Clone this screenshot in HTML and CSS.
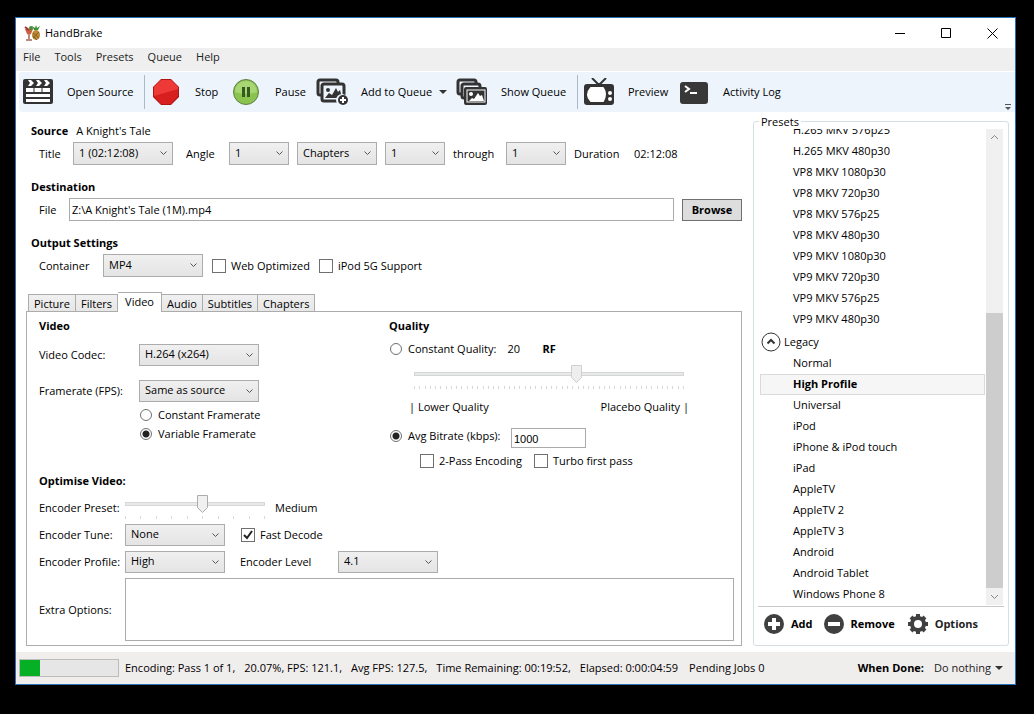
FILE: index.html
```
<!DOCTYPE html>
<html lang="en">
<head>
    <meta charset="UTF-8">
    <meta name="viewport" content="width=device-width, initial-scale=1.0">
    <title>HandBrake</title>
    <link rel="stylesheet" href="styles.css">
</head>
<body>
    <div class="window">
        <header class="titlebar">
            <svg class="app-icon" width="17" height="17" viewBox="0 0 17 17">
                <path d="M10 5L8 1l3 2 1-3 1 3 3-2-2 4z" fill="#3f8f3a"/>
                <ellipse cx="12" cy="10" rx="4" ry="5" fill="#b98a35"/>
                <path d="M9 8l6 5M9 11l4 4M15 7l-6 6" stroke="#8a5f22"/>
                <path d="M1 4h8L7 9 5 10 3 9z" fill="#c9603f"/>
                <path d="M1 2l4 3" stroke="#a33" stroke-width="2"/>
                <circle cx="7" cy="3" r="2" fill="#4d8a3c"/>
                <path d="M5 10v5M2 15h6" stroke="#b88b80" stroke-width="2"/>
            </svg>
            <h1>HandBrake</h1>
            <div class="window-buttons">
                <button type="button" aria-label="Minimize"><svg width="11" height="11"><path d="M0 5.5h10" stroke="#000"/></svg></button>
                <button type="button" aria-label="Maximize"><svg width="11" height="11"><path d="M.5.5h9v9h-9z" fill="none" stroke="#000"/></svg></button>
                <button type="button" aria-label="Close"><svg width="11" height="11"><path d="M.5.5l10 10M10.5.5l-10 10" stroke="#000"/></svg></button>
            </div>
        </header>

        <nav class="menu">
            <a href="#">File</a>
            <a href="#">Tools</a>
            <a href="#">Presets</a>
            <a href="#">Queue</a>
            <a href="#">Help</a>
        </nav>

        <div class="toolbar">
            <button type="button" class="tool tool-open">
                <svg width="30" height="28" viewBox="0 0 30 28">
                    <rect y="1" width="30" height="25" rx="2" fill="#333"/>
                    <path d="M5 2h3l3 3-3 3H5l2-3zM13 2h3l3 3-3 3h-3l2-3zM21 2h3l3 3-3 3h-3l2-3z" fill="#fff"/>
                    <path d="M3 10h24v4H3zM3 16h24v3H3zM3 21h24v3H3z" fill="#fff"/>
                    <path d="M11 10v4M19 10v4" stroke="#333"/>
                </svg>
                Open Source
            </button>
            <button type="button" class="tool tool-stop">
                <svg width="28" height="28" viewBox="0 0 28 28">
                    <path d="M8 1h10l8 8v10l-8 8H8l-8-8V9z" fill="#b01414"/>
                    <path d="M8 2h10l7 7v9l-7 8H8l-7-8V9z" fill="#d81f1f"/>
                    <path d="M8 2h10l7 7v2L1 18V9z" fill="#ee3a36"/>
                </svg>
                Stop
            </button>
            <button type="button" class="tool tool-pause">
                <svg width="28" height="28" viewBox="0 0 28 28">
                    <circle cx="13" cy="14" r="12.5" fill="#8bc34f" stroke="#5f7f45"/>
                    <path d="M2 14a11 11 0 0 1 22 0q-11 4-22 0z" fill="#a8d672"/>
                    <path d="M9 9h3v10H9zM14 9h3v10h-3z" fill="#355a20"/>
                </svg>
                Pause
            </button>
            <button type="button" class="tool tool-add">
                <svg width="32" height="28" viewBox="0 0 32 28">
                    <rect x="2" y="2" width="20" height="15" rx="2" fill="#edf4fc" stroke="#333" stroke-width="3"/>
                    <rect x="6" y="6" width="22" height="17" rx="2" fill="#edf4fc" stroke="#333" stroke-width="3"/>
                    <circle cx="12" cy="12" r="2" fill="#333"/>
                    <path d="M9 20l4-5 3 2 4-7 2 4 2-2 2 8z" fill="#333"/>
                    <circle cx="26" cy="22" r="6" fill="#edf4fc"/>
                    <circle cx="27" cy="22" r="5" fill="#333"/>
                    <path d="M27 19v6M24 22h6" stroke="#fff" stroke-width="2"/>
                </svg>
                Add to Queue
                <svg class="arrow" width="8" height="4" viewBox="0 0 8 4"><path d="M0 0h8L4 4z" fill="#333"/></svg>
            </button>
            <button type="button" class="tool tool-show">
                <svg width="32" height="28" viewBox="0 0 32 28">
                    <rect x="2" y="2" width="18" height="14" rx="2" fill="#edf4fc" stroke="#333" stroke-width="3"/>
                    <rect x="6" y="6" width="18" height="14" rx="2" fill="#edf4fc" stroke="#333" stroke-width="3"/>
                    <rect x="8" y="9" width="23" height="18" rx="2" fill="#333"/>
                    <rect x="11" y="12" width="18" height="12" fill="#333" stroke="#fff"/>
                    <circle cx="15" cy="16" r="2" fill="#fff"/>
                    <path d="M13 23l3-3 2 1 4-6 2 3 2-1 2 6z" fill="#fff"/>
                </svg>
                Show Queue
            </button>
            <button type="button" class="tool tool-preview">
                <svg width="30" height="28" viewBox="0 0 30 28">
                    <path d="M8 0l7 7 7-7" fill="none" stroke="#333" stroke-width="2"/>
                    <path d="M11 7q4-4 8 0z" fill="#333"/>
                    <rect y="6" width="30" height="21" rx="3" fill="#333"/>
                    <path d="M7 10h12q4 6 0 13H7Q1 17 7 10z" fill="#fff" stroke="#fff" stroke-width="2" stroke-linejoin="round"/>
                    <circle cx="26" cy="15" r="2" fill="#fff"/>
                    <circle cx="26" cy="21" r="2" fill="#fff"/>
                </svg>
                Preview
            </button>
            <button type="button" class="tool">
                <svg width="29" height="28" viewBox="0 0 29 28">
                    <rect y="4" width="28" height="22" rx="3" fill="#383838"/>
                    <path d="M5 8l4 3-4 3M10 15h7" fill="none" stroke="#fff" stroke-width="2"/>
                </svg>
                Activity Log
            </button>
            <svg class="overflow" width="6" height="6" viewBox="0 0 6 6"><path d="M0 .5h6" stroke="#555"/><path d="M0 3h6L3 6z" fill="#555"/></svg>
        </div>

        <main class="content">
            <div class="settings">
                <div class="section">
                    <div class="source"><h2>Source</h2><span>A Knight's Tale</span></div>
                    <div class="row">
                        <label class="label-title" for="title">Title</label>
                        <select id="title" class="w100"><option>1 (02:12:08)</option></select>
                        <label class="label-angle" for="angle">Angle</label>
                        <select id="angle" class="w60"><option>1</option></select>
                        <select class="w80" aria-label="Range type"><option>Chapters</option></select>
                        <select class="w60" aria-label="Start chapter"><option>1</option></select>
                        <label class="label-through" for="end">through</label>
                        <select id="end" class="w60"><option>1</option></select>
                        <span class="label-duration">Duration</span>
                        <span>02:12:08</span>
                    </div>
                </div>

                <div class="section">
                    <h2>Destination</h2>
                    <div class="row">
                        <label class="label-file" for="file">File</label>
                        <input type="text" id="file" class="file" value="Z:\A Knight's Tale (1M).mp4">
                        <button type="button" class="browse">Browse</button>
                    </div>
                </div>

                <div class="section">
                    <h2>Output Settings</h2>
                    <div class="row">
                        <label class="label-container" for="container">Container</label>
                        <select id="container" class="w100"><option>MP4</option></select>
                        <div class="container-checks">
                            <label class="check"><input type="checkbox">Web Optimized</label>
                            <label class="check"><input type="checkbox">iPod 5G Support</label>
                        </div>
                    </div>
                </div>

                <div class="tabs" role="tablist">
                    <button type="button" role="tab">Picture</button>
                    <button type="button" role="tab">Filters</button>
                    <button type="button" role="tab" class="active" aria-selected="true">Video</button>
                    <button type="button" role="tab">Audio</button>
                    <button type="button" role="tab">Subtitles</button>
                    <button type="button" role="tab">Chapters</button>
                </div>

                <div class="panel" role="tabpanel">
                    <div class="columns">
                        <div class="video">
                            <h2>Video</h2>
                            <div class="field">
                                <label for="codec">Video Codec:</label>
                                <select id="codec"><option>H.264 (x264)</option></select>
                            </div>
                            <div class="field">
                                <label for="framerate">Framerate (FPS):</label>
                                <select id="framerate"><option>Same as source</option></select>
                            </div>
                            <div class="radios">
                                <label class="radio"><input type="radio" name="rate">Constant Framerate</label>
                                <label class="radio"><input type="radio" name="rate" checked>Variable Framerate</label>
                            </div>
                        </div>

                        <div class="quality">
                            <h2>Quality</h2>
                            <div class="quality-row">
                                <label class="radio"><input type="radio" name="quality">Constant Quality:</label>
                                <span class="rf-value">20</span>
                                <strong>RF</strong>
                            </div>
                            <div class="quality-slider">
                                <input type="range" class="slider disabled" min="0" max="51" value="31" aria-label="Quality" disabled>
                                <div class="ticks ticks-quality"></div>
                            </div>
                            <div class="quality-ends"><span>| Lower Quality</span><span>Placebo Quality |</span></div>
                            <div class="bitrate-row">
                                <label class="radio" for="avg"><input type="radio" id="avg" name="quality" checked>Avg Bitrate (kbps):</label>
                                <input type="text" class="bitrate" value="1000" aria-label="Average bitrate">
                            </div>
                            <div class="passes">
                                <label class="check"><input type="checkbox">2-Pass Encoding</label>
                                <label class="check"><input type="checkbox">Turbo first pass</label>
                            </div>
                        </div>
                    </div>

                    <h2>Optimise Video:</h2>
                    <div class="optimise">
                        <label for="preset" class="label-preset">Encoder Preset:</label>
                        <div class="optimise-row preset-row">
                            <div class="preset-slider">
                                <input type="range" id="preset" class="slider" min="0" max="9" value="5">
                                <div class="ticks ticks-preset"></div>
                            </div>
                            <span>Medium</span>
                        </div>
                        <label for="tune">Encoder Tune:</label>
                        <div class="optimise-row">
                            <select id="tune" class="w100"><option>None</option></select>
                            <label class="check"><input type="checkbox" checked>Fast Decode</label>
                        </div>
                        <label for="profile">Encoder Profile:</label>
                        <div class="optimise-row">
                            <select id="profile" class="w100"><option>High</option></select>
                            <label class="label-level" for="level">Encoder Level</label>
                            <select id="level" class="w100"><option>4.1</option></select>
                        </div>
                        <label for="extra">Extra Options:</label>
                        <textarea id="extra"></textarea>
                    </div>
                </div>
            </div>

            <fieldset class="presets">
                <legend>Presets</legend>
                <div class="preset-view">
                    <div class="preset-list">
                        <button type="button">H.265 MKV 576p25</button>
                        <button type="button">H.265 MKV 480p30</button>
                        <button type="button">VP8 MKV 1080p30</button>
                        <button type="button">VP8 MKV 720p30</button>
                        <button type="button">VP8 MKV 576p25</button>
                        <button type="button">VP8 MKV 480p30</button>
                        <button type="button">VP9 MKV 1080p30</button>
                        <button type="button">VP9 MKV 720p30</button>
                        <button type="button">VP9 MKV 576p25</button>
                        <button type="button">VP9 MKV 480p30</button>
                        <button type="button" class="group" aria-expanded="true">
                            <svg width="20" height="20" viewBox="0 0 20 20"><circle cx="10" cy="10" r="9" fill="#fff" stroke="#333"/><path d="M6.500 11.500L10 8l3.500 3.500" fill="none" stroke="#333" stroke-width="2"/></svg>
                            Legacy
                        </button>
                        <button type="button">Normal</button>
                        <button type="button" class="selected">High Profile</button>
                        <button type="button">Universal</button>
                        <button type="button">iPod</button>
                        <button type="button">iPhone &amp; iPod touch</button>
                        <button type="button">iPad</button>
                        <button type="button">AppleTV</button>
                        <button type="button">AppleTV 2</button>
                        <button type="button">AppleTV 3</button>
                        <button type="button">Android</button>
                        <button type="button">Android Tablet</button>
                        <button type="button">Windows Phone 8</button>
                    </div>
                    <div class="scrollbar" aria-hidden="true">
                        <svg width="17" height="17"><path d="M5 10l3.500-3.500L12 10" fill="none" stroke="#888"/></svg>
                        <div class="scroll-space"></div>
                        <div class="scroll-thumb"></div>
                        <svg width="17" height="17"><path d="M5 7l3.500 3.500L12 7" fill="none" stroke="#888"/></svg>
                    </div>
                </div>
                <div class="preset-actions">
                    <button type="button">
                        <svg width="20" height="20" viewBox="0 0 20 20"><circle cx="10" cy="10" r="10" fill="#404040"/><path d="M10 4v12M4 10h12" stroke="#fff" stroke-width="4"/></svg>
                        Add
                    </button>
                    <button type="button">
                        <svg width="20" height="20" viewBox="0 0 20 20"><circle cx="10" cy="10" r="10" fill="#404040"/><path d="M4 10h12" stroke="#fff" stroke-width="4"/></svg>
                        Remove
                    </button>
                    <button type="button" class="options">
                        <svg width="20" height="20" viewBox="0 0 20 20"><circle cx="10" cy="10" r="8" fill="#404040"/><path d="M10 0v20M0 10h20M3 3l14 14M17 3L3 17" stroke="#404040" stroke-width="4"/><circle cx="10" cy="10" r="4" fill="#fff"/></svg>
                        Options
                    </button>
                </div>
            </fieldset>
        </main>

        <footer class="status">
            <progress value="20.07" max="100" aria-label="Encoding progress"></progress>
            <div class="encoding">
                <span>Encoding: Pass 1 of 1,</span>
                <span>20.07%, FPS: 121.1,</span>
                <span>Avg FPS: 127.5,</span>
                <span>Time Remaining: 00:19:52,</span>
                <span>Elapsed: 0:00:04:59</span>
            </div>
            <span class="pending">Pending Jobs 0</span>
            <strong>When Done:</strong>
            <button type="button" class="when-done">Do nothing<svg width="8" height="4" viewBox="0 0 8 4"><path d="M0 0h8L4 4z" fill="#333"/></svg></button>
        </footer>
    </div>
</body>
</html>
```
FILE: styles.css
```
* {
    box-sizing: border-box;
}
body {
    margin: 0;
    padding: 17px 18px 29px 15px;
    background-color: #000;
    color: #000;
    font-family: "Open Sans", "Noto Sans", sans-serif;
    font-size: 11px;
    line-height: 16px;
}
h1, h2 {
    margin: 0;
    font-size: 11px;
    line-height: 16px;
}
h1 {
    font-weight: normal;
}
button, input, select, textarea {
    margin: 0;
    font: inherit;
    color: inherit;
}
button {
    padding: 0;
    border: none;
    background: none;
    white-space: nowrap;
}
svg {
    flex: none;
}
.window {
    border: 1px solid #2a70b8;
    background-color: #fff;
}

/* title bar and menu */
.titlebar {
    display: flex;
    align-items: center;
    height: 30px;
    padding-left: 8px;
}
.app-icon {
    margin-right: 4px;
}
.window-buttons {
    display: flex;
    margin-left: auto;
}
.window-buttons button {
    display: flex;
    align-items: center;
    justify-content: center;
    width: 46px;
    height: 28px;
}
.menu {
    display: flex;
    gap: 14px;
    height: 23px;
    padding: 1px 7px;
    background-color: #efefef;
}
.menu a {
    color: #222;
    text-decoration: none;
}

/* toolbar */
.toolbar {
    display: flex;
    align-items: center;
    height: 41px;
    margin-left: 3px;
    padding-left: 4px;
    border-top: 1px solid #fff;
    border-radius: 3px 0 0 3px;
    background-color: #edf4fc;
}
.tool {
    display: flex;
    align-items: center;
    gap: 14px;
    height: 34px;
}
.tool-open {
    width: 122px;
    margin-right: 8px;
    border-right: 1px solid #a9bac9;
}
.tool-stop {
    width: 80px;
}
.tool-pause {
    width: 83px;
}
.tool-add {
    width: 140px;
}
.tool-show {
    width: 122px;
    margin-right: 6px;
    border-right: 1px solid #a9bac9;
}
.tool-preview {
    width: 96px;
}
.tool-add, .tool-show {
    gap: 13px;
}
.tool .arrow {
    margin-left: -6px;
}
.overflow {
    align-self: flex-end;
    margin: 0 4px 2px auto;
}

/* main area */
.content {
    display: grid;
    grid-template-columns: 1fr 256px;
    gap: 11px;
    padding: 2px 6px 6px 10px;
}
.settings {
    display: flex;
    flex-direction: column;
    padding-top: 9px;
}
.section {
    padding-left: 5px;
    margin-bottom: 14px;
}
.source {
    display: flex;
    gap: 8px;
}
.row {
    display: flex;
    align-items: center;
    gap: 8px;
    height: 23px;
    margin-top: 3px;
    padding-left: 8px;
}
.label-title {
    width: 26px;
}
.label-angle {
    width: 40px;
    padding-left: 5px;
}
.label-through {
    width: 45px;
}
.label-duration {
    width: 52px;
}
.label-file {
    width: 22px;
}
.label-container {
    width: 56px;
}
select {
    width: 120px;
    height: 22px;
    padding: 0 18px 2px 5px;
    border: 1px solid #acacac;
    border-radius: 0;
    appearance: none;
    background: url("data:image/svg+xml,%3Csvg xmlns='http://www.w3.org/2000/svg' width='7' height='5'%3E%3Cpath d='M.5.500l3 3 3-3' fill='none' stroke='%23555'/%3E%3C/svg%3E") no-repeat right 5px center, linear-gradient(#f0f0f0, #e4e4e4);
}
.row select {
    height: 23px;
}
select.w100 {
    width: 100px;
}
select.w80 {
    width: 80px;
}
select.w60 {
    width: 60px;
}
input[type="text"] {
    border: 1px solid #ababab;
    border-radius: 0;
    background-color: #fff;
}
.file {
    flex: 1;
    height: 23px;
    padding: 0 2px;
}
.browse {
    width: 60px;
    height: 22px;
    border: 1px solid #707070;
    background-color: #ddd;
    font-weight: bold;
}
.container-checks {
    display: flex;
    gap: 9px;
    padding-left: 1px;
}
.check, .radio {
    display: flex;
    align-items: center;
    gap: 5px;
    white-space: nowrap;
}
input[type="checkbox"] {
    width: 14px;
    height: 14px;
    border: 1px solid #707070;
    appearance: none;
    background-color: #fff;
}
input[type="checkbox"]:checked {
    background: url("data:image/svg+xml,%3Csvg xmlns='http://www.w3.org/2000/svg' width='12' height='12'%3E%3Cpath d='M2 6l3 3 5-7' fill='none' stroke='%23222' stroke-width='2'/%3E%3C/svg%3E") no-repeat center;
}
input[type="radio"] {
    width: 12px;
    height: 12px;
    border: 1px solid #707070;
    border-radius: 50%;
    appearance: none;
    background-color: #fff;
}
input[type="radio"]:checked {
    background: radial-gradient(circle, #222 0 3px, #fff 4px);
}
.radio {
    gap: 6px;
    height: 19px;
}

/* tabs */
.tabs {
    display: flex;
    align-items: flex-end;
    height: 20px;
    margin-top: 1px;
    padding-left: 2px;
}
.tabs button {
    height: 18px;
    padding: 0 5px;
    border: 1px solid #acacac;
    border-left-width: 0;
    border-bottom: none;
    background: linear-gradient(#f0f0f0, #e6e6e6);
}
.tabs button:first-child {
    border-left-width: 1px;
}
.tabs .active {
    position: relative;
    z-index: 1;
    height: 20px;
    padding: 0 7px 2px;
    background: #fff;
}
.panel {
    flex: 1;
    margin-top: -1px;
    padding: 6px 7px 4px 12px;
    border: 1px solid #acacac;
}
.columns {
    display: grid;
    grid-template-columns: 350px 1fr;
    min-height: 155px;
}
.field {
    display: flex;
    align-items: center;
    height: 22px;
    margin-top: 10px;
}
.field + .field {
    margin-top: 14px;
}
.field label {
    width: 100px;
}
.radios {
    margin-top: 3px;
    padding-left: 101px;
}
.quality-row {
    display: flex;
    align-items: center;
    margin-top: 5px;
    padding-left: 1px;
}
.rf-value {
    width: 35px;
    margin-left: 11px;
}
.quality-slider {
    width: 270px;
    margin: 8px 0 0 25px;
}
.slider {
    display: block;
    width: 100%;
    height: 18px;
    appearance: none;
    background: none;
}
.slider::-webkit-slider-runnable-track {
    height: 4px;
    margin-top: -2px;
    border: 1px solid #d6d6d6;
    background-color: #e7eaea;
}
.slider::-webkit-slider-thumb {
    width: 11px;
    height: 18px;
    margin-top: -8px;
    appearance: none;
    background: url("data:image/svg+xml,%3Csvg xmlns='http://www.w3.org/2000/svg' width='11' height='18'%3E%3Cpath d='M.5.500h10v12l-5 5-5-5z' fill='%23f0f0f0' stroke='%23acacac'/%3E%3C/svg%3E");
}
.disabled::-webkit-slider-thumb {
    background: url("data:image/svg+xml,%3Csvg xmlns='http://www.w3.org/2000/svg' width='11' height='18'%3E%3Cpath d='M.5.500h10v12l-5 5-5-5z' fill='%23eee' stroke='%23d0d0d0'/%3E%3C/svg%3E");
}
.ticks {
    height: 3px;
    margin-top: 2px;
    border-right: 1px solid #d8d8d8;
}
.ticks-quality {
    background: repeating-linear-gradient(to right, #d8d8d8 0 1px, transparent 1px calc(100% / 51));
}
.ticks-preset {
    background: repeating-linear-gradient(to right, #d8d8d8 0 1px, transparent 1px calc(100% / 9));
}
.quality-ends {
    display: flex;
    justify-content: space-between;
    width: 280px;
    margin: 10px 0 0 20px;
}
.bitrate-row {
    display: flex;
    align-items: center;
    height: 20px;
    margin-top: 13px;
    padding-left: 1px;
}
.bitrate-row .radio {
    width: 121px;
    padding-bottom: 5px;
}
input.bitrate {
    width: 75px;
    height: 20px;
    padding: 1px 2px 0;
    font-family: "Liberation Sans", Arial, sans-serif;
}
.passes {
    display: flex;
    gap: 12px;
    margin: 5px 0 0 31px;
}

/* optimise video */
.optimise {
    display: grid;
    grid-template-columns: 86px 1fr;
    align-items: center;
    row-gap: 5px;
    white-space: nowrap;
}
.optimise-row {
    display: flex;
    align-items: center;
    height: 22px;
}
.optimise-row .check {
    margin-left: 16px;
}
.label-preset, .preset-row {
    padding-top: 8px;
}
.preset-row {
    gap: 10px;
    height: 30px;
}
.preset-slider {
    width: 140px;
    padding-bottom: 2px;
}
.label-level {
    width: 113px;
    padding-left: 15px;
}
textarea {
    display: block;
    width: 100%;
    height: 63px;
    border: 1px solid #ababab;
    resize: none;
}

/* presets */
.presets {
    display: flex;
    flex-direction: column;
    min-width: 0;
    margin: 0;
    padding: 0 4px;
    border: 1px solid #d5dfe5;
    border-radius: 3px;
}
legend {
    margin-left: 1px;
    padding: 0 2px;
    line-height: 15px;
}
.preset-view {
    display: flex;
    flex: 1 1 0;
    min-height: 0;
    padding-right: 1px;
}
.preset-list {
    display: flex;
    flex: 1;
    flex-direction: column;
    justify-content: flex-end;
    margin: 0 1px 0 2px;
    overflow: hidden;
}
.preset-list button {
    flex: none;
    height: 21px;
    padding: 0 0 1px 32px;
    border: 1px solid transparent;
    text-align: left;
}
.preset-list .selected {
    border-color: #dadada;
    background-color: #f6f6f6;
    font-weight: bold;
}
.preset-list .group {
    display: flex;
    align-items: center;
    gap: 3px;
    height: 23px;
    padding: 1px 0 0;
}
.scrollbar {
    display: flex;
    flex-direction: column;
    width: 17px;
    background-color: #f0f0f0;
}
.scroll-space {
    flex: 167;
}
.scroll-thumb {
    flex: 275;
    background-color: #cdcdcd;
}
.preset-actions {
    display: flex;
    align-items: center;
    gap: 11px;
    height: 39px;
    margin-top: 1px;
    padding: 0 6px 5px;
    border-top: 1px solid #c8c8c8;
}
.preset-actions button {
    display: flex;
    align-items: center;
    gap: 7px;
    font-weight: bold;
}
.preset-actions .options {
    margin-left: 2px;
    color: #222;
}

/* status bar */
.status {
    display: flex;
    align-items: center;
    height: 32px;
    padding: 0 12px 0 3px;
    background-color: #f0eded;
    white-space: nowrap;
}
progress {
    width: 100px;
    height: 18px;
    border: 1px solid #bcbcbc;
    appearance: none;
    background-color: #e6e6e6;
}
progress::-webkit-progress-bar {
    background-color: #e6e6e6;
}
progress::-webkit-progress-value {
    background-color: #06b025;
}
.encoding {
    display: flex;
    gap: 9px;
    margin-left: 6px;
}
.pending {
    margin: 0 auto 0 11px;
}
.when-done {
    display: flex;
    align-items: center;
    gap: 4px;
    margin-left: 10px;
    color: #222;
}
```
